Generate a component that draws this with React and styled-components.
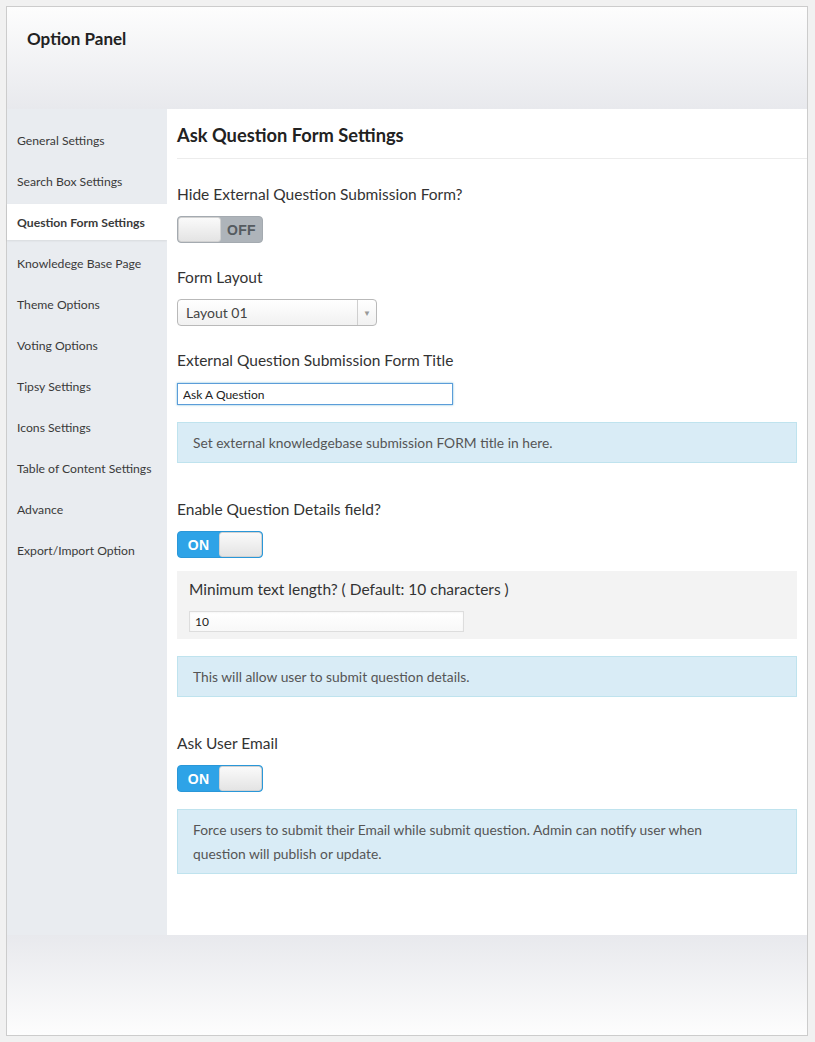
import React from "react";
import styled, { createGlobalStyle } from "styled-components";

const GlobalStyle = createGlobalStyle`
  html, body {
    margin: 0;
    padding: 0;
    background: #f1f1f1;
  }
  body {
    font-family: Lato, "Open Sans", sans-serif;
    color: #333;
  }
`;

const Page = styled.div`
  padding: 6px 7px 6px 6px;
`;

const Panel = styled.div`
  border: 1px solid #cccccc;
  background: #e9ecf0;
  display: flex;
  flex-direction: column;
`;

const Header = styled.div`
  height: 102px;
  background: linear-gradient(to bottom, #fdfdfd, #e8e9ed);
  padding: 21px 0 0 20px;
  box-sizing: border-box;
`;

const PanelTitle = styled.h1`
  margin: 0;
  font-size: 17px;
  font-weight: 700;
  color: #222;
`;

const Body = styled.div`
  display: flex;
  min-height: 826px;
`;

const Sidebar = styled.nav`
  width: 160px;
  flex-shrink: 0;
  background: #e9ecf0;
  padding-top: 13px;
  display: flex;
  flex-direction: column;
  gap: 5px;
`;

const NavItem = styled.div`
  height: 36px;
  display: flex;
  align-items: center;
  padding-left: 10px;
  font-size: 12.2px;
  color: #3a3a3a;
  background: ${(p) => (p.active ? "#fff" : "transparent")};
  font-weight: ${(p) => (p.active ? 700 : 400)};
  box-shadow: ${(p) => (p.active ? "0 1px 2px rgba(0,0,0,0.08)" : "none")};
`;

const Content = styled.main`
  flex: 1;
  background: #fff;
  padding: 0 10px 40px 10px;
`;

const SectionTitle = styled.h2`
  margin: 0 -10px 0 0;
  font-size: 18.3px;
  font-weight: 700;
  color: #222;
  padding: 15px 0 12px;
  border-bottom: 1px solid #ececec;
`;

const Field = styled.div`
  display: flex;
  flex-direction: column;
  align-items: flex-start;
  margin-top: ${(p) => p.top || 24}px;
`;

const Label = styled.div`
  font-size: 15.5px;
  color: #333;
  margin-bottom: ${(p) => p.mb || 13}px;
`;

const ToggleWrap = styled.div`
  width: 86px;
  height: 27px;
  border-radius: 4px;
  display: flex;
  overflow: hidden;
  box-sizing: border-box;
  background: ${(p) => (p.on ? "#2ea3e7" : "#aeb4ba")};
  border: 1px solid ${(p) => (p.on ? "#2a97d8" : "#a4aab0")};
  flex-direction: ${(p) => (p.on ? "row" : "row-reverse")};
`;

const ToggleText = styled.span`
  flex: 1;
  display: flex;
  align-items: center;
  justify-content: center;
  font-family: "Liberation Sans", Arial, sans-serif;
  font-weight: 700;
  font-size: 14px;
  color: ${(p) => (p.on ? "#fff" : "#555b60")};
  letter-spacing: 0.3px;
`;

const Knob = styled.span`
  width: 43px;
  background: linear-gradient(to bottom, #fafafa, #e4e4e4);
  border-radius: 3px;
  border: 1px solid #d2d2d2;
  box-sizing: border-box;
`;

const Select = styled.div`
  width: 200px;
  height: 27px;
  box-sizing: border-box;
  border: 1px solid #b9b9b9;
  border-radius: 4px;
  background: linear-gradient(to bottom, #ffffff, #f1f1f1);
  display: flex;
  font-size: 14px;
  color: #444;
`;

const SelectValue = styled.span`
  flex: 1;
  display: flex;
  align-items: center;
  padding-left: 8px;
`;

const SelectArrow = styled.span`
  width: 18px;
  border-left: 1px solid #cfcfcf;
  display: flex;
  align-items: center;
  justify-content: center;
  color: #999;
  font-size: 8px;
`;

const TextInput = styled.input`
  width: ${(p) => p.w}px;
  height: ${(p) => p.h}px;
  box-sizing: border-box;
  border: 1px solid ${(p) => (p.focus ? "#5b9dd9" : "#dddddd")};
  box-shadow: ${(p) => (p.focus ? "0 0 2px rgba(30,140,190,0.6)" : "inset 0 1px 2px rgba(0,0,0,0.04)")};
  background: ${(p) => (p.focus ? "#fff" : "linear-gradient(to bottom, #fff, #f8f8f8)")};
  font-family: Lato, sans-serif;
  font-size: 12px;
  color: #222;
  padding: 0 5px;
  outline: none;
`;

const Info = styled.div`
  align-self: stretch;
  margin-top: 17px;
  background: #d9ecf6;
  border: 1px solid #bfe3ee;
  padding: 8px 15px 7px;
  font-size: 13.8px;
  line-height: 24px;
  color: #555;
`;

const SubBox = styled.div`
  align-self: stretch;
  margin-top: 13px;
  background: #f3f3f3;
  padding: 9px 12px 7px;
  display: flex;
  flex-direction: column;
  align-items: flex-start;
`;

const SubLabel = styled.div`
  font-size: 15.5px;
  color: #333;
  margin-bottom: 13px;
`;

const Footer = styled.div`
  height: 100px;
  background: linear-gradient(to bottom, #e8e9ed, #fdfdfd);
`;

function Toggle({ on }) {
  return (
    <ToggleWrap on={on ? 1 : 0}>
      <ToggleText on={on ? 1 : 0}>{on ? "ON" : "OFF"}</ToggleText>
      <Knob />
    </ToggleWrap>
  );
}

const navItems = [
  "General Settings",
  "Search Box Settings",
  "Question Form Settings",
  "Knowledege Base Page",
  "Theme Options",
  "Voting Options",
  "Tipsy Settings",
  "Icons Settings",
  "Table of Content Settings",
  "Advance",
  "Export/Import Option",
];

export default function App() {
  return (
    <>
      <GlobalStyle />
      <Page>
        <Panel>
          <Header>
            <PanelTitle>Option Panel</PanelTitle>
          </Header>
          <Body>
            <Sidebar>
              {navItems.map((item) => (
                <NavItem key={item} active={item === "Question Form Settings" ? 1 : 0}>
                  {item}
                </NavItem>
              ))}
            </Sidebar>
            <Content>
              <SectionTitle>Ask Question Form Settings</SectionTitle>

              <Field top={26}>
                <Label>Hide External Question Submission Form?</Label>
                <Toggle on={false} />
              </Field>

              <Field top={25}>
                <Label>Form Layout</Label>
                <Select>
                  <SelectValue>Layout 01</SelectValue>
                  <SelectArrow>▼</SelectArrow>
                </Select>
              </Field>

              <Field top={25}>
                <Label mb={14}>External Question Submission Form Title</Label>
                <TextInput w={276} h={22} focus={1} defaultValue="Ask A Question" />
                <Info>Set external knowledgebase submission FORM title in here.</Info>
              </Field>

              <Field top={37}>
                <Label>Enable Question Details field?</Label>
                <Toggle on />
                <SubBox>
                  <SubLabel>Minimum text length? ( Default: 10 characters )</SubLabel>
                  <TextInput w={275} h={21} defaultValue="10" />
                </SubBox>
                <Info>This will allow user to submit question details.</Info>
              </Field>

              <Field top={37}>
                <Label>Ask User Email</Label>
                <Toggle on />
                <Info>
                  Force users to submit their Email while submit question. Admin can notify user when
                  <br />
                  question will publish or update.
                </Info>
              </Field>
            </Content>
          </Body>
          <Footer />
        </Panel>
      </Page>
    </>
  );
}
